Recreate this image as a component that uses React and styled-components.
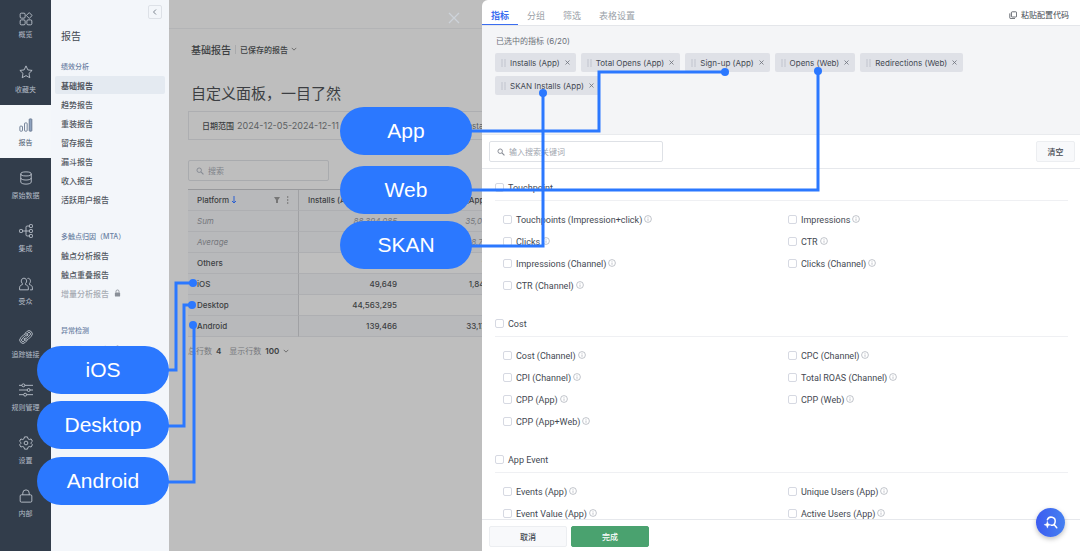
import React, { useState } from "react"
import styled, { createGlobalStyle } from "styled-components"

const App = () => (
  <>
    <GlobalStyle />
    <Page>
      <Rail />
      <Menu />
      <Report />
      <Drawer />
      <Callouts />
      <AssistButton type="button" aria-label="AI">
        <svg viewBox="0 0 24 24" width="15" height="15">
          <path d="M7 7.500a6.500 6.500 0 1 1 6 9M18 15.500l4 5" />
          <path d="M7 10l1.500 4 4 1.500-4 1.500L7 21l-1.500-4-4-1.500 4-1.500z" fill="#fff" strokeWidth="0.500" />
        </svg>
      </AssistButton>
    </Page>
  </>
)

export default App

const railItems = [
  {
    name: "概览",
    icon: (
      <>
        <rect x="2" y="2" width="8.500" height="8.500" rx="2" />
        <path d="M17.500 1l5 5-5 5-5-5z" />
        <rect x="2" y="13.500" width="8.500" height="8.500" rx="2" />
        <rect x="13.500" y="13.500" width="8.500" height="8.500" rx="2" />
      </>
    ),
  },
  {
    name: "收藏夹",
    icon: <path d="M12 1.500l3.200 6.900 7.300.9-5.400 5.100 1.400 7.400L12 18.200l-6.500 3.600 1.400-7.400L1.500 9.300l7.300-.9z" />,
  },
  {
    name: "报告",
    active: true,
    icon: (
      <>
        <rect x="1.500" y="14" width="4.500" height="8.500" rx="1" />
        <rect x="9.500" y="8.500" width="4.500" height="14" rx="1" />
        <rect x="17.500" y="1.500" width="4.500" height="21" rx="1" fill="#8fa3bf" />
      </>
    ),
  },
  {
    name: "原始数据",
    icon: (
      <>
        <ellipse cx="12" cy="5" rx="9" ry="3.500" />
        <path d="M3 5v14c0 2 4 3.500 9 3.500s9-1.500 9-3.500V5M3 12c0 2 4 3.500 9 3.500s9-1.500 9-3.500" />
      </>
    ),
  },
  {
    name: "集成",
    icon: (
      <>
        <rect x="1" y="9.500" width="5" height="5" rx="1" />
        <rect x="18" y="1" width="5" height="5" rx="1" />
        <rect x="18" y="9.500" width="5" height="5" rx="1" />
        <rect x="18" y="18" width="5" height="5" rx="1" />
        <path d="M6 12h12M18 3.500h-4q-2 0-2 2v13q0 2 2 2h4" />
      </>
    ),
  },
  {
    name: "受众",
    icon: (
      <>
        <path d="M8.500 2a4.500 5 0 0 1 2.800 9v2.200c3 .8 4.700 2.300 4.700 5.300V22H1v-3.500c0-3 1.700-4.500 4.700-5.300V11A4.500 5 0 0 1 8.500 2z" />
        <path d="M14.500 2.500c4.500-1.500 7 5 3.500 8.500v2.200c3 .8 5 2.300 5 5.300V22h-4" />
      </>
    ),
  },
  {
    name: "追踪链接",
    icon: (
      <>
        <path d="M10 6l3.200-3.200a5.500 5.500 0 0 1 7.900 7.900l-5 5a5.500 5.500 0 0 1-7.900 0l2.100-2.100a2.600 2.600 0 0 0 3.700 0l5-5a2.600 2.600 0 0 0-3.700-3.700L13 7.200" />
        <path d="M14 18l-3.200 3.200a5.500 5.500 0 0 1-7.900-7.900l5-5a5.500 5.500 0 0 1 7.900 0l-2.100 2.100a2.600 2.600 0 0 0-3.700 0l-5 5a2.600 2.600 0 0 0 3.700 3.700l2.300-2.300" />
      </>
    ),
  },
  {
    name: "规则管理",
    icon: (
      <>
        <path d="M0 4h5M10 4h14M0 12h14M19 12h5M0 20h8M13 20h11" />
        <circle cx="7.500" cy="4" r="2.500" />
        <circle cx="16.500" cy="12" r="2.500" />
        <circle cx="10.500" cy="20" r="2.500" />
      </>
    ),
  },
  {
    name: "设置",
    icon: (
      <>
        <path d="M9.500 1.500h5l.9 3.200 2.200 1.300 3.200-.9 2.200 3.900-2.300 2.300v1.400l2.300 2.300-2.200 3.900-3.200-.9-2.200 1.300-.9 3.200h-5l-.9-3.200L6.400 18l-3.200.9L1 15l2.300-2.300v-1.400L1 9l2.200-3.900 3.200.9 2.200-1.300z" />
        <circle cx="12" cy="12" r="3.200" />
      </>
    ),
  },
  {
    name: "内部",
    icon: (
      <>
        <rect x="2" y="10" width="20" height="12.500" rx="2" />
        <path d="M6.500 10V7a5.500 5.500 0 0 1 11 0v3" />
      </>
    ),
  },
]

const Rail = () => (
  <RailNav>
    {railItems.map(item => (
      <RailLink href="#" key={item.name} $active={item.active}>
        <svg viewBox="0 0 24 24" width="14" height="14">
          {item.icon}
        </svg>
        {item.name}
      </RailLink>
    ))}
  </RailNav>
)

const menuGroups = [
  {
    title: "绩效分析",
    items: ["基础报告", "趋势报告", "重装报告", "留存报告", "漏斗报告", "收入报告", "活跃用户报告"],
  },
  {
    title: "多触点归因（MTA）",
    items: ["触点分析报告", "触点重叠报告", "增量分析报告"],
  },
  { title: "异常检测", items: ["异常安装报告"] },
]

const locked = ["增量分析报告", "异常安装报告"]

const Menu = () => (
  <MenuAside>
    <CollapseButton type="button" aria-label="收起">
      <svg viewBox="0 0 8 8" width="8" height="8">
        <path d="M5 1.500L2.500 4 5 6.500" />
      </svg>
    </CollapseButton>
    <MenuTitle>报告</MenuTitle>
    {menuGroups.map(group => (
      <MenuGroup key={group.title}>
        <h3>{group.title}</h3>
        <ul>
          {group.items.map(name => (
            <li key={name}>
              <MenuLink
                href="#"
                $active={name === "基础报告"}
                $locked={locked.includes(name)}
              >
                {name}
                {locked.includes(name) && (
                  <svg viewBox="0 0 8 9" width="7" height="8">
                    <rect x="1" y="4" width="6" height="4.500" rx="1" fill="#8a8f98" />
                    <path d="M2.300 4V2.700a1.700 1.700 0 0 1 3.400 0V4" fill="none" stroke="#8a8f98" />
                  </svg>
                )}
              </MenuLink>
            </li>
          ))}
        </ul>
      </MenuGroup>
    ))}
  </MenuAside>
)

const rows = [
  { name: "Sum", installs: "88,394,085", opens: "35,032,518", summary: true },
  { name: "Average", installs: "22,098,521", opens: "8,759,129", summary: true },
  { name: "Others", installs: "43,641,675", opens: "12,730" },
  { name: "iOS", installs: "49,649", opens: "1,842,306", shaded: true },
  { name: "Desktop", installs: "44,563,295", opens: "0" },
  { name: "Android", installs: "139,466", opens: "33,177,482", shaded: true },
]

const Report = () => (
  <ReportMain>
    <TopBar>
      <CloseButton type="button" aria-label="关闭">
        <svg viewBox="0 0 12 12" width="12" height="12">
          <path d="M1 1l10 10M11 1L1 11" />
        </svg>
      </CloseButton>
    </TopBar>
    <ReportBody>
      <Crumbs>
        <strong>基础报告</strong>
        <SavedButton type="button">
          已保存的报告
          <Chevron />
        </SavedButton>
      </Crumbs>
      <ReportTitle>自定义面板，一目了然</ReportTitle>
      <FilterBar>
        <strong>日期范围</strong>
        <DateText>2024-12-05-2024-12-11</DateText>
        <EventText>Event Installs</EventText>
      </FilterBar>
      <SearchBox $width="141px" $dim>
        <SearchIcon />
        <input type="text" placeholder="搜索" aria-label="搜索" />
      </SearchBox>
      <Table>
        <thead>
          <tr>
            <th>
              <HeadCell>
                Platform
                <svg viewBox="0 0 6 8" width="6" height="8">
                  <path d="M3 0v7M1 5l2 2 2-2" fill="none" stroke="#2a5fd0" />
                </svg>
                <HeadTools>
                  <svg viewBox="0 0 6 6" width="6" height="6">
                    <path d="M0 0h6L4 3v3H2V3z" fill="#777" />
                  </svg>
                  <svg viewBox="0 0 2 8" width="2" height="8">
                    <path d="M0 1h1.300M0 4h1.300M0 7h1.300" stroke="#777" strokeWidth="1.300" />
                  </svg>
                </HeadTools>
              </HeadCell>
            </th>
            <th>Installs (App)</th>
            <th>Total Opens (App)</th>
          </tr>
        </thead>
        <tbody>
          {rows.map(row => (
            <Row key={row.name} $summary={row.summary} $shaded={row.shaded}>
              <td>{row.name}</td>
              <td>{row.installs}</td>
              <td>{row.opens}</td>
            </Row>
          ))}
        </tbody>
      </Table>
      <TableFooter>
        <span>总行数</span>
        <strong>4</strong>
        <PageSize>显示行数</PageSize>
        <strong>100</strong>
        <Chevron />
      </TableFooter>
    </ReportBody>
  </ReportMain>
)

const Chevron = () => (
  <svg viewBox="0 0 8 8" width="6" height="6">
    <path d="M1 2.500l3 3 3-3" fill="none" stroke="#666" strokeWidth="1.200" />
  </svg>
)

const SearchIcon = () => (
  <svg viewBox="0 0 10 10" width="8" height="8">
    <circle cx="4" cy="4" r="2.800" fill="none" stroke="#868b94" strokeWidth="1.200" />
    <path d="M6.200 6.200L9.300 9.300" stroke="#868b94" strokeWidth="1.400" />
  </svg>
)

const metricGroups = [
  {
    title: "Touchpoint",
    items: [
      "Touchpoints (Impression+click)",
      "Impressions",
      "Clicks",
      "CTR",
      "Impressions (Channel)",
      "Clicks (Channel)",
      "CTR (Channel)",
    ],
  },
  {
    title: "Cost",
    items: [
      "Cost (Channel)",
      "CPC (Channel)",
      "CPI (Channel)",
      "Total ROAS (Channel)",
      "CPP (App)",
      "CPP (Web)",
      "CPP (App+Web)",
    ],
  },
  {
    title: "App Event",
    items: ["Events (App)", "Unique Users (App)", "Event Value (App)", "Active Users (App)"],
  },
]

const Drawer = () => {
  const [tab, setTab] = useState("指标")
  const [chips, setChips] = useState([
    "Installs (App)",
    "Total Opens (App)",
    "Sign-up (App)",
    "Opens (Web)",
    "Redirections (Web)",
    "SKAN Installs (App)",
  ])

  return (
    <DrawerPanel>
      <DrawerHeader>
        {["指标", "分组", "筛选", "表格设置"].map(name => (
          <Tab type="button" key={name} $active={tab === name} onClick={() => setTab(name)}>
            {name}
          </Tab>
        ))}
        <PasteButton type="button">
          <svg viewBox="0 0 10 10" width="8" height="8">
            <rect x="3" y="1" width="6.500" height="6.500" rx="1" />
            <path d="M1 3v5.500q0 1 1 1h5.500" />
          </svg>
          粘贴配置代码
        </PasteButton>
      </DrawerHeader>
      <Selected>
        <p>已选中的指标 ({chips.length}/20)</p>
        <ChipList>
          {chips.map(name => (
            <Chip key={name}>
              <svg viewBox="0 0 5 8" width="5" height="8">
                <path d="M.5 1h1M3.500 1h1M.5 3h1M3.500 3h1M.5 5h1M3.500 5h1M.5 7h1M3.500 7h1" stroke="#a3a9b5" />
              </svg>
              {name}
              <ChipRemove
                type="button"
                aria-label={`移除 ${name}`}
                onClick={() => setChips(chips.filter(chip => chip !== name))}
              >
                <svg viewBox="0 0 5 5" width="5" height="5">
                  <path d="M.5.5l4 4M4.500.5l-4 4" stroke="#6b707a" strokeWidth=".8" />
                </svg>
              </ChipRemove>
            </Chip>
          ))}
        </ChipList>
      </Selected>
      <DrawerTools>
        <SearchBox $width="174px">
          <SearchIcon />
          <input type="text" placeholder="输入搜索关键词" aria-label="输入搜索关键词" />
        </SearchBox>
        <Button type="button" $width="39px" onClick={() => setChips([])}>
          清空
        </Button>
      </DrawerTools>
      <Metrics>
        {metricGroups.map(group => (
          <section key={group.title}>
            <GroupLabel>
              <input type="checkbox" />
              {group.title}
            </GroupLabel>
            <MetricGrid>
              {group.items.map(name => (
                <MetricLabel key={name}>
                  <input type="checkbox" />
                  {name}
                  <svg viewBox="0 0 8 8" width="8" height="8">
                    <circle cx="4" cy="4" r="3.400" />
                    <path d="M4 3.500v2.300M4 2v.7" />
                  </svg>
                </MetricLabel>
              ))}
            </MetricGrid>
          </section>
        ))}
      </Metrics>
      <DrawerFooter>
        <Button type="button" $width="78px">
          取消
        </Button>
        <Button type="button" $width="78px" $primary>
          完成
        </Button>
      </DrawerFooter>
    </DrawerPanel>
  )
}

const callouts = [
  { name: "App", x: 340, y: 107, line: "M470 131H599V72H725", dot: [725, 72] },
  { name: "Web", x: 340, y: 166, line: "M470 190H818V71", dot: [818, 71] },
  { name: "SKAN", x: 340, y: 221, line: "M470 246H543V93", dot: [543, 93] },
  { name: "iOS", x: 37, y: 346, line: "M167 370H176V283H193", dot: [193, 283] },
  { name: "Desktop", x: 37, y: 401, line: "M167 426H184V305H192", dot: [192, 305] },
  { name: "Android", x: 37, y: 457, line: "M167 482H194V325", dot: [193, 325] },
]

const Callouts = () => (
  <>
    <Connectors viewBox="0 0 1080 551" width="1080" height="551">
      {callouts.map(({ name, line, dot }) => (
        <g key={name}>
          <path d={line} />
          <circle cx={dot[0]} cy={dot[1]} r="4" />
        </g>
      ))}
    </Connectors>
    {callouts.map(({ name, x, y }) => (
      <Pill key={name} $x={x} $y={y}>
        {name}
      </Pill>
    ))}
  </>
)

const GlobalStyle = createGlobalStyle`
  * {
    box-sizing: border-box;
  }
  body {
    margin: 0;
    overflow: hidden;
    font-family: Inter, "Liberation Sans", "Noto Sans CJK SC", sans-serif;
    font-size: 8px;
    color: #444952;
  }
  button, input {
    font: inherit;
    color: inherit;
  }
  button {
    padding: 0;
    border: 0;
    background: none;
    cursor: pointer;
  }
  a {
    color: inherit;
    text-decoration: none;
  }
  ul, h1, h2, h3, p {
    margin: 0;
    padding: 0;
    list-style: none;
    font-weight: 400;
  }
  svg {
    flex: none;
  }
`

const Page = styled.div`
  position: relative;
  display: grid;
  grid-template-columns: 51px 118px minmax(0, 313fr) minmax(0, 598fr);
  height: 100vh;
  background: #bebebe;
`

const RailNav = styled.nav`
  display: flex;
  flex-direction: column;
  background: #323d4b;
  overflow: hidden;
`

const RailLink = styled.a`
  flex: none;
  display: flex;
  flex-direction: column;
  align-items: center;
  gap: 6px;
  height: 53px;
  padding-top: 13px;
  font-size: 7px;
  line-height: 10px;
  color: ${({ $active }) => ($active ? "#4b5a70" : "#b4bcc7")};
  background: ${({ $active }) => ($active ? "#f4f7fa" : "transparent")};

  &:first-child {
    gap: 4px;
    height: 52px;
    padding-top: 12px;
  }

  > svg {
    fill: none;
    stroke: ${({ $active }) => ($active ? "#64748c" : "#c0c7d0")};
    stroke-width: 1.5;
    stroke-linejoin: round;
  }
`

const MenuAside = styled.aside`
  display: flex;
  flex-direction: column;
  padding: 5px 4px 0;
  background: #f3f6fa;
  overflow: hidden;
`

const CollapseButton = styled.button`
  align-self: flex-end;
  display: grid;
  place-items: center;
  width: 14px;
  height: 14px;
  margin-right: 3px;
  border: 1px solid #dde1e7;
  border-radius: 2px;

  svg {
    fill: none;
    stroke: #7d8590;
  }
`

const MenuTitle = styled.h2`
  padding: 10px 6px 0;
  font-size: 10px;
  line-height: 14px;
`

const MenuGroup = styled.section`
  padding-top: 19px;

  > h3 {
    padding-left: 6px;
    font-size: 7px;
    font-weight: 500;
    line-height: 10px;
    margin-bottom: 4px;
    color: #6a80a3;
  }

  > ul {
    display: grid;
    gap: 1px;
  }

  & + & {
    padding-top: 24px;
  }
`

const MenuLink = styled.a`
  display: flex;
  align-items: center;
  gap: 5px;
  height: 18px;
  padding: 0 6px;
  border-radius: 2px;
  font-weight: ${({ $active }) => ($active ? 700 : 500)};
  color: ${({ $locked }) => ($locked ? "#a6abb3" : "#50555e")};
  background: ${({ $active }) => ($active ? "#e4eaf1" : "transparent")};
`

const ReportMain = styled.main`
  overflow: hidden;
  color: #3c3e42;
`

const TopBar = styled.header`
  display: flex;
  justify-content: flex-end;
  height: 29px;
  padding: 12px 22px 0;
  border-bottom: 1px solid #b3b4b6;
`

const CloseButton = styled.button`
  height: 12px;

  svg {
    display: block;
    stroke: #cdd3da;
    stroke-width: 1.3;
  }
`

const ReportBody = styled.div`
  padding: 11px 0 0 19px;
`

const Crumbs = styled.div`
  display: flex;
  align-items: center;
  gap: 4px;
  height: 18px;
  padding-left: 3px;

  > strong {
    font-size: 10px;
    font-weight: 500;
  }
`

const SavedButton = styled.button`
  display: flex;
  align-items: center;
  gap: 3px;
  height: 9px;
  padding-left: 4px;
  border-left: 1px solid #a9aaac;
  font-weight: 500;
`

const ReportTitle = styled.h1`
  padding: 25px 0 0 3px;
  font-size: 15px;
  line-height: 22px;
  white-space: nowrap;
`

const FilterBar = styled.div`
  display: flex;
  align-items: center;
  gap: 3px;
  height: 29px;
  margin: 6px 0 20px;
  padding-left: 13px;
  border: 1px solid #adaeb1;
  border-right: 0;
  white-space: nowrap;

  > strong {
    font-weight: 500;
  }
`

const DateText = styled.span`
  flex: none;
  font-size: 9px;
  color: #5c5e62;
`

const EventText = styled.span`
  flex: none;
  margin-left: 100px;
  color: #5c5e62;
`

const SearchBox = styled.div`
  display: flex;
  align-items: center;
  gap: 4px;
  width: ${({ $width }) => $width};
  height: 21px;
  padding: 0 7px;
  border: 1px solid ${({ $dim }) => ($dim ? "#a9abae" : "#dee1e6")};
  border-radius: 2px;

  > input {
    flex: 1;
    min-width: 0;
    padding: 0;
    border: 0;
    outline: 0;
    background: transparent;
  }

  > input::placeholder {
    color: ${({ $dim }) => ($dim ? "#7f8389" : "#a0a5ae")};
  }
`

const Table = styled.table`
  table-layout: fixed;
  width: 331px;
  margin-top: 8px;
  border-collapse: separate;
  border-spacing: 0;
  border-top: 1px solid #98999c;
  white-space: nowrap;

  th,
  td {
    height: 21px;
    padding: 0 12px 0 9px;
    border-bottom: 1px solid #aeafb2;
    line-height: 10px;
    text-align: right;
  }

  th {
    padding-right: 9px;
    background: #b8b9bb;
    font-weight: 500;
    text-align: left;
  }

  th:first-child,
  td:first-child {
    width: 111px;
    border-right: 1px solid #a0a1a4;
    background: #b8b9bb;
    text-align: left;
  }
`

const Row = styled.tr`
  color: ${({ $summary }) => ($summary ? "#75777b" : "inherit")};
  font-style: ${({ $summary }) => ($summary ? "italic" : "normal")};
  font-weight: ${({ $summary }) => ($summary ? 400 : 500)};
  background: ${({ $summary, $shaded }) => ($summary || $shaded ? "#b8b9bb" : "transparent")};
`

const HeadCell = styled.div`
  display: flex;
  align-items: center;
  gap: 2px;
`

const HeadTools = styled.span`
  display: flex;
  align-items: center;
  gap: 7px;
  margin-left: auto;
`

const TableFooter = styled.footer`
  display: flex;
  align-items: center;
  gap: 4px;
  padding-top: 8px;
  line-height: 12px;
  color: #77797d;

  > strong {
    font-weight: 600;
    color: #3c3e42;
  }
`

const PageSize = styled.span`
  margin-left: 4px;
`

const DrawerPanel = styled.section`
  display: flex;
  flex-direction: column;
  min-height: 0;
  border-top-left-radius: 6px;
  background: #fff;
  overflow: hidden;
`

const DrawerHeader = styled.header`
  flex: none;
  display: flex;
  height: 26px;
  border-bottom: 1px solid #e4e6ea;
`

const Tab = styled.button`
  padding: 6px 9px 0;
  border-bottom: 1px solid ${({ $active }) => ($active ? "#3a6df0" : "transparent")};
  font-size: 9px;
  font-weight: ${({ $active }) => ($active ? 700 : 400)};
  color: ${({ $active }) => ($active ? "#3a6df0" : "#9a9fa8")};
`

const PasteButton = styled.button`
  display: flex;
  align-items: center;
  gap: 4px;
  margin-left: auto;
  padding: 4px 11px 0 0;

  svg {
    fill: none;
    stroke: #444952;
  }
`

const Selected = styled.div`
  flex: none;
  min-height: 109px;
  padding: 9px 13px;
  border-bottom: 1px solid #e9ebee;
  background: #f4f5f7;

  > p {
    line-height: 12px;
    padding-left: 1px;
    color: #6c717a;
  }
`

const ChipList = styled.ul`
  display: flex;
  flex-wrap: wrap;
  gap: 4px 5px;
  margin-top: 6px;
`

const Chip = styled.li`
  display: flex;
  align-items: center;
  gap: 4px;
  height: 19px;
  padding: 0 5px 0 6px;
  border-radius: 2px;
  background: #dfe1e7;
`

const ChipRemove = styled.button`
  display: flex;
  padding: 1px;
`

const DrawerTools = styled.div`
  flex: none;
  display: flex;
  justify-content: space-between;
  padding: 6px 5px 6px 7px;
  border-bottom: 1px solid #e6e8ec;
`

const Button = styled.button`
  width: ${({ $width }) => $width};
  height: 21px;
  border: 1px solid ${({ $primary }) => ($primary ? "#4aa26f" : "#eceef1")};
  border-radius: 2px;
  font-weight: 500;
  color: ${({ $primary }) => ($primary ? "#fff" : "#444952")};
  background: ${({ $primary }) => ($primary ? "#4aa26f" : "#f8f9fb")};
`

const Metrics = styled.div`
  flex: 1;
  min-height: 0;
  padding: 6px 12px 0 13px;
  font-family: Roboto, "Liberation Sans", sans-serif;
  font-size: 9px;
  overflow: hidden;

  input {
    flex: none;
    appearance: none;
    width: 9px;
    height: 9px;
    margin: 0;
    border: 1px solid #d6d9e2;
    border-radius: 2px;
    background: #fff;
  }

  input:checked {
    background: #3a6df0;
  }
`

const GroupLabel = styled.label`
  display: flex;
  align-items: center;
  gap: 4px;
  height: 26px;
  border-bottom: 1px solid #eff0f3;
`

const MetricGrid = styled.div`
  display: grid;
  grid-template-columns: 1fr 1fr;
  column-gap: 5px;
  padding: 8px 0 14px 8px;
`

const MetricLabel = styled.label`
  display: flex;
  align-items: center;
  gap: 4px;
  height: 22px;

  > input {
    margin-bottom: 2px;
  }

  > svg {
    margin: 0 0 3px -2px;
    fill: none;
    stroke: #a6abb5;
    stroke-width: 0.7;
  }
`

const DrawerFooter = styled.footer`
  flex: none;
  display: flex;
  gap: 4px;
  padding: 6px 7px 4px;
  border-top: 1px solid #e6e8ec;
`

const AssistButton = styled.button`
  position: fixed;
  right: 15px;
  bottom: 14px;
  display: grid;
  place-items: center;
  width: 29px;
  height: 29px;
  border-radius: 50%;
  background: linear-gradient(90deg, #3c5cf0, #4580f0);
  box-shadow: 0 2px 5px rgba(0, 0, 0, 0.25);

  svg {
    fill: none;
    stroke: #fff;
    stroke-width: 2.4;
    stroke-linecap: round;
  }
`

const Connectors = styled.svg`
  position: absolute;
  top: 0;
  left: 0;
  pointer-events: none;

  path {
    fill: none;
    stroke: #2b78ff;
    stroke-width: 3;
  }

  circle {
    fill: #2b78ff;
  }
`

const Pill = styled.div`
  position: absolute;
  left: ${({ $x }) => $x}px;
  top: ${({ $y }) => $y}px;
  display: grid;
  place-items: center;
  width: 132px;
  height: 48px;
  border-radius: 24px;
  background: #2b78ff;
  color: #fff;
  font-family: "Liberation Sans", sans-serif;
  font-size: 21px;
`
